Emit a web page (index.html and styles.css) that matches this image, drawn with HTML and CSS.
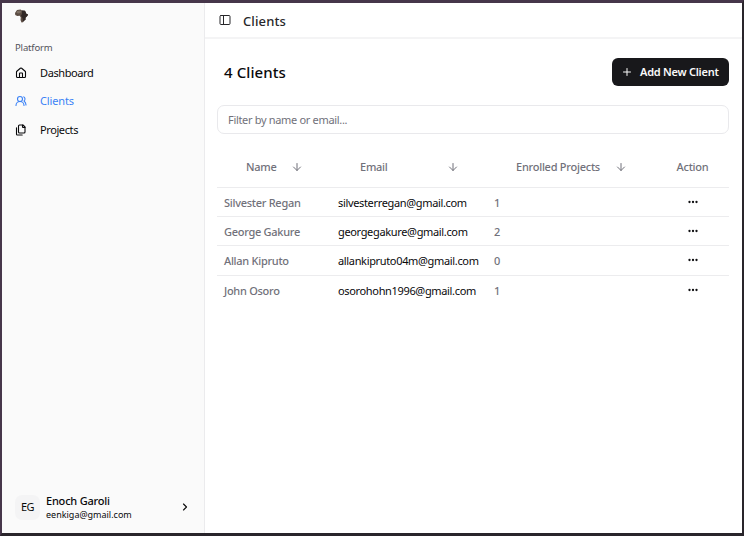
FILE: index.html
```
<!DOCTYPE html>
<html lang="en">
<head>
<meta charset="utf-8">
<title>Clients</title>
<link rel="stylesheet" href="styles.css">
</head>
<body>
<svg class="sprite" width="0" height="0">
  <symbol id="down" viewBox="0 0 24 24"><path d="M12 5v14M19 12l-7 7-7-7"/></symbol>
  <symbol id="dots" viewBox="0 0 24 24"><circle cx="5" cy="12" r="1"/><circle cx="12" cy="12" r="1"/><circle cx="19" cy="12" r="1"/></symbol>
</svg>
<div class="app">
  <aside class="sidebar">
    <svg class="logo" viewBox="0 0 26 28"><path d="M4 2 11 1l3 2 6 .5 3 6.500 3 .5-1 3-4 4v4l-3 2-2 3-3 .5-2-5 .5-5-2-3.500-5 .5-4-2L0 8z" fill="#5b4c43"/><path d="M14 3l6 .5 3 6.500 3 .5-1 3-4 4v4l-3 2-2 2-1-7-3-5 2-4z" fill="#302725"/><path d="M4 4l6-1 3 3-5 3-5-1z" fill="#7d6f64"/></svg>
    <div class="group-label"><span>Platform</span></div>
    <nav class="nav">
      <a class="nav-item"><svg class="icon" viewBox="0 0 24 24"><path d="M15 21v-8a1 1 0 0 0-1-1h-4a1 1 0 0 0-1 1v8"/><path d="M3 10a2 2 0 0 1 .709-1.528l7-5.999a2 2 0 0 1 2.582 0l7 5.999A2 2 0 0 1 21 10v9a2 2 0 0 1-2 2H5a2 2 0 0 1-2-2z"/></svg><span class="tight">Dashboard</span></a>
      <a class="nav-item active"><svg class="icon" viewBox="0 0 24 24"><path d="M18 21a8 8 0 0 0-16 0"/><circle cx="10" cy="8" r="5"/><path d="M22 20c0-3.370-2-6.500-4-8a5 5 0 0 0-.45-8.300"/></svg><span>Clients</span></a>
      <a class="nav-item"><svg class="icon" viewBox="0 0 24 24"><path d="M15 2v4a1 1 0 0 0 1 1h4"/><path d="M9 18a2 2 0 0 1-2-2V4a2 2 0 0 1 2-2h7l4 4v10a2 2 0 0 1-2 2Z"/><path d="M3 7.600v12.800A1.600 1.600 0 0 0 4.600 22h9.800"/></svg><span class="tight">Projects</span></a>
    </nav>
    <div class="user">
      <div class="avatar"><span>EG</span></div>
      <div class="user-info"><strong>Enoch Garoli</strong><small>eenkiga@gmail.com</small></div>
      <svg class="icon chevron" viewBox="0 0 24 24"><path d="m9 18 6-6-6-6"/></svg>
    </div>
  </aside>
  <main class="main">
    <header class="topbar">
      <svg class="icon" viewBox="0 0 24 24"><rect x="2" y="3" width="20" height="18" rx="2"/><path d="M9 3v18"/></svg>
      <h1>Clients</h1>
    </header>
    <section class="content">
      <div class="heading">
        <h2>4 Clients</h2>
        <button class="add"><svg class="icon" viewBox="0 0 24 24"><path d="M5 12h14M12 5v14"/></svg><span>Add New Client</span></button>
      </div>
      <div class="filter"><span>Filter by name or email...</span></div>
      <div class="table">
        <div class="row head">
          <div class="cell sort"><span>Name</span><svg class="icon"><use href="#down"/></svg></div>
          <div class="cell sort"><span>Email</span><svg class="icon"><use href="#down"/></svg></div>
          <div class="cell sort enrolled"><span>Enrolled Projects</span><svg class="icon"><use href="#down"/></svg></div>
          <div class="cell action">Action</div>
        </div>
        <div class="row"><div class="cell name">Silvester Regan</div><div class="cell email">silvesterregan@gmail.com</div><div class="cell count">1</div><div class="cell action"><svg class="icon dots"><use href="#dots"/></svg></div></div>
        <div class="row"><div class="cell name">George Gakure</div><div class="cell email">georgegakure@gmail.com</div><div class="cell count">2</div><div class="cell action"><svg class="icon dots"><use href="#dots"/></svg></div></div>
        <div class="row"><div class="cell name">Allan Kipruto</div><div class="cell email">allankipruto04m@gmail.com</div><div class="cell count">0</div><div class="cell action"><svg class="icon dots"><use href="#dots"/></svg></div></div>
        <div class="row"><div class="cell name">John Osoro</div><div class="cell email">osorohohn1996@gmail.com</div><div class="cell count">1</div><div class="cell action"><svg class="icon dots"><use href="#dots"/></svg></div></div>
      </div>
    </section>
  </main>
</div>
</body>
</html>
```
FILE: styles.css
```
* { box-sizing: border-box; }
body { margin: 0; font: 11px/16px "Noto Sans", "Open Sans", sans-serif; color: #09090b; letter-spacing: -.15px; }
.sprite { position: absolute; }
.app { display: flex; width: 744px; height: 536px; border: solid; border-width: 3px 2px; border-color: #46364a #29252b #29252b #46364a; background: #fff; }
.icon { width: 12px; height: 12px; flex: none; fill: none; stroke: currentColor; stroke-width: 2; stroke-linecap: round; stroke-linejoin: round; }
.sidebar { width: 203px; flex: none; display: flex; flex-direction: column; background: #fafafa; border-right: 1px solid #ebebed; }
.sidebar .icon { stroke-width: 2.200; }
.logo { width: 13px; height: 14px; margin: 6px 0 0 13px; }
.group-label { margin: 17px 0 0 13px; height: 16px; font-size: 9.500px; color: #52525b; letter-spacing: -.15px; }
.nav { margin-top: 3px; }
.nav-item { display: flex; align-items: center; gap: 13px; height: 28.400px; padding-left: 13px; }
.nav-item.active { color: #3b82f6; height: 28px; }
.nav-item:last-child { height: 29px; }
.nav-item .tight { letter-spacing: -.4px; }
.user { display: flex; align-items: center; margin-top: auto; height: 52px; padding: 0 13px; }
.avatar { width: 25px; height: 25px; border-radius: 7px; background: #f4f4f5; display: flex; align-items: center; justify-content: center; letter-spacing: -.5px; }
.user-info { flex: 1; margin-left: 6px; display: flex; flex-direction: column; }
.user-info strong { font-weight: 500; line-height: 14px; letter-spacing: -.2px; }
.user-info small { font-size: 9px; line-height: 13px; letter-spacing: 0; }
.main { flex: 1; min-width: 0; }
.topbar { height: 36px; display: flex; align-items: center; padding: 1px 0 0 14px; gap: 12px; border-bottom: 2px solid #f4f4f5; color: #27272a; }
.topbar .icon { margin-bottom: 1px; }
h1, h2 { margin: 0; font-weight: 500; }
h1 { font-size: 13px; letter-spacing: .1px; }
.content { padding: 19px 13px 0 12px; }
.heading { display: flex; align-items: center; justify-content: space-between; height: 28px; padding-left: 7px; }
h2 { font-size: 15px; letter-spacing: .08px; }
.add { display: flex; align-items: center; gap: 7px; width: 117px; height: 28px; padding: 0 0 0 9px; border: 0; border-radius: 6px; background: #18181b; color: #fafafa; font: 600 11px/16px "Noto Sans", sans-serif; letter-spacing: -.25px; white-space: nowrap; }
.filter { margin-top: 19px; height: 29px; border: 1px solid #e9e9ec; border-radius: 7px; padding: 6px 10px; color: #71717a; letter-spacing: -.32px; }
.table { margin-top: 13px; }
.row { display: grid; grid-template-columns: 114px 156px 170px 71px; height: 29.200px; border-bottom: 1px solid #ececee; }
.row:last-child { border: 0; }
.row.head { height: 41px; color: #71717a; font-weight: 500; }
.cell { display: flex; align-items: center; padding: 1px 0 0 7px; white-space: nowrap; letter-spacing: -.25px; }
.cell.sort { justify-content: space-between; padding: 0 28px 0 29px; }
.cell.enrolled { padding-right: 30px; letter-spacing: -.25px; }
.cell.name, .cell.count { color: #71717a; font-weight: 500; }
.cell.name { letter-spacing: -.28px; }
.cell.email { letter-spacing: -.34px; }
.cell.action { justify-content: center; padding: 0; }
.dots { stroke-width: 2.600; margin-bottom: 1px; }
```
